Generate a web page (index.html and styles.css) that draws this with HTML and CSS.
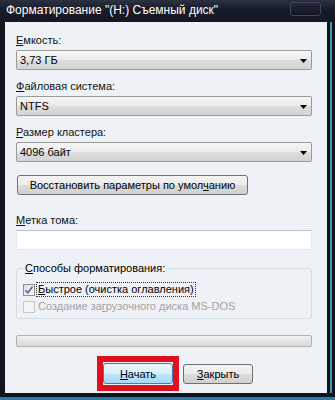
FILE: index.html
```html
<!DOCTYPE html>
<html lang="ru">
<head>
  <meta charset="UTF-8">
  <title>Форматирование</title>
  <link rel="stylesheet" href="styles.css">
</head>
<body>
<div class="window">
  <div class="titlebar">
    <span class="title">Форматирование "(H:) Съемный диск"</span>
    <span class="close-btn"></span>
  </div>
  <div class="content">
    <div class="field">
      <div class="field-label"><u>Е</u>мкость:</div>
      <div class="combo"><span>3,73 ГБ</span><svg class="arrow" width="7" height="4" viewBox="0 0 7 4"><path d="M0 0H7L3.5 4Z" fill="#000"/></svg></div>
    </div>
    <div class="field">
      <div class="field-label"><u>Ф</u>айловая система:</div>
      <div class="combo"><span>NTFS</span><svg class="arrow" width="7" height="4" viewBox="0 0 7 4"><path d="M0 0H7L3.5 4Z" fill="#000"/></svg></div>
    </div>
    <div class="field">
      <div class="field-label"><u>Р</u>азмер кластера:</div>
      <div class="combo"><span>4096 байт</span><svg class="arrow" width="7" height="4" viewBox="0 0 7 4"><path d="M0 0H7L3.5 4Z" fill="#000"/></svg></div>
    </div>

    <button class="btn restore">Восстановить параметры по умол<u>ч</u>анию</button>

    <div class="field volume">
      <div class="field-label"><u>М</u>етка тома:</div>
      <div class="text-input"></div>
    </div>

    <fieldset class="group">
      <legend><u>С</u>пособы форматирования:</legend>
      <div class="check-row">
        <span class="check-box checked"><svg width="10" height="10" viewBox="0 0 10 10"><path d="M1.5 5.2L3.8 7.8L8.5 1.8" fill="none" stroke="#4b6a9c" stroke-width="1.6"/></svg></span>
        <span class="check-text focused"><u>Б</u>ыстрое (очистка оглавления)</span>
      </div>
      <div class="check-row disabled">
        <span class="check-box"></span>
        <span class="check-text">Создание за<u>г</u>рузочного диска MS-DOS</span>
      </div>
    </fieldset>

    <div class="progress"></div>

    <div class="actions">
      <span class="highlight"><button class="btn btn-default"><u>Н</u>ачать</button></span>
      <button class="btn close"><u>З</u>акрыть</button>
    </div>
  </div>
</div>
</body>
</html>
```

FILE: styles.css
```css
body {
  margin: 0;
  background: #10131f;
  font-family: "Liberation Sans", Arial, sans-serif;
  font-size: 11px;
  color: #000;
}

.window {
  width: 335px;
  height: 400px;
  display: flex;
  flex-direction: column;
  box-sizing: border-box;
  border-bottom: 3px solid #2a7ca2;
  background: #11141f;
}

.titlebar {
  height: 22px;
  flex-shrink: 0;
  display: flex;
  align-items: flex-start;
  justify-content: space-between;
  padding: 0 14px 0 6px;
  background: linear-gradient(#2c3242, #171a28 45%, #141725);
}

.title {
  color: #fff;
  font-size: 12px;
  line-height: 22px;
  margin-top: -1px;
}

.close-btn {
  width: 29px;
  height: 12px;
  margin-top: 2px;
  border: 1px solid #40475a;
  border-radius: 3px;
  background: linear-gradient(#23283a, #12151f);
}

.content {
  width: 322px;
  height: 371px;
  margin-left: 5px;
  box-sizing: border-box;
  padding: 11px 15px 0 11px;
  background: #eef1f6;
  box-shadow: 3px 0 0 #11141f, 5px 0 0 #3a9ab2;
}

.field {
  margin-bottom: 9px;
}

.field-label {
  line-height: 14px;
  margin-bottom: 3px;
  color: #111;
}

.combo {
  height: 20px;
  box-sizing: border-box;
  border: 1px solid #9a9a9a;
  border-radius: 2px;
  background: linear-gradient(#f6f6f6, #ebebeb 50%, #dddddd 51%, #d4d4d4);
  display: flex;
  align-items: center;
  justify-content: space-between;
  padding: 0 4px 0 3px;
}

.combo span {
  line-height: 18px;
}

.arrow {
  margin-top: 1px;
}

.btn {
  font-family: "Liberation Sans", Arial, sans-serif;
  font-size: 11px;
  color: #000;
  height: 20px;
  box-sizing: border-box;
  border: 1px solid #707070;
  border-radius: 3px;
  background: linear-gradient(#f3f3f3, #ebebeb 50%, #dddddd 51%, #cfcfcf);
  padding: 0;
  cursor: pointer;
}

.restore {
  display: block;
  width: 231px;
  margin: 13px 0 0 1px;
}

.volume {
  margin-top: 18px;
  margin-bottom: 0;
}

.text-input {
  height: 20px;
  box-sizing: border-box;
  background: #fff;
  border: 1px solid #e2e8ee;
  border-top-color: #b9bfc6;
}

.group {
  margin: 11px 0 0;
  padding: 6px 0 3px 6px;
  border: 1px solid #d3dbe2;
  border-radius: 3px;
}

.group legend {
  padding: 0 2px;
  line-height: 14px;
}

.check-row {
  display: flex;
  align-items: center;
  height: 17px;
}

.check-box {
  width: 12px;
  height: 12px;
  box-sizing: border-box;
  border: 1px solid #8f8f8f;
  background: linear-gradient(135deg, #dcdcdc, #fbfbfb);
  display: flex;
  align-items: center;
  justify-content: center;
  margin-right: 2px;
}

.check-text {
  line-height: 13px;
  padding: 0 1px;
}

.focused {
  outline: 1px dotted #333;
}

.disabled .check-box {
  border-color: #c9c9c9;
  background: #f4f4f4;
}

.disabled .check-text {
  color: #a3a3a3;
}

.progress {
  height: 12px;
  margin-top: 16px;
  box-sizing: border-box;
  border: 1px solid #b2b2b2;
  border-radius: 2px;
  background: linear-gradient(#f2f2f2, #e4e4e4 50%, #dadada);
}

.actions {
  display: flex;
  align-items: center;
  margin: 9px 0 0 81px;
}

.highlight {
  display: flex;
  padding: 1px 0 1px 0;
  border: 6px solid #e0101c;
  margin-right: 4px;
}

.btn-default {
  width: 70px;
  height: 21px;
  border-color: #3c7fb1;
  background: linear-gradient(#eaf6fd, #d9f0fc 50%, #bee6fd 51%, #a7d9f5);
}

.close {
  width: 70px;
}
```
